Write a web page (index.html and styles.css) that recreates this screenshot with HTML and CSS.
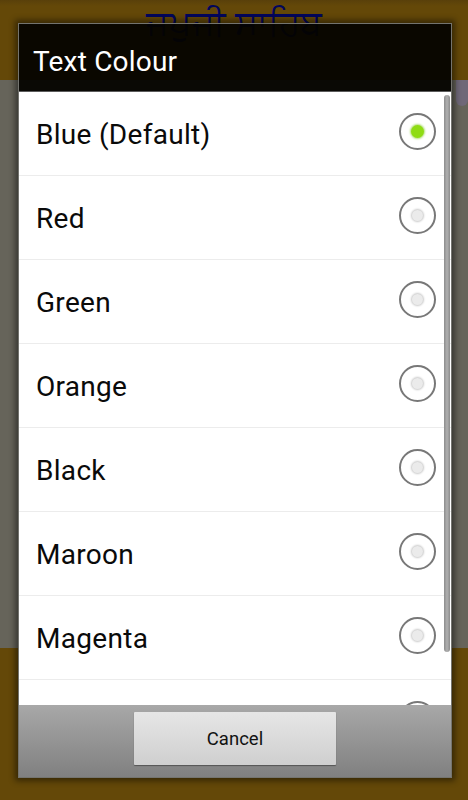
FILE: index.html
```html
<!DOCTYPE html>
<html>
  <head>
    <meta name="viewport" content="width=device-width, initial-scale=1.0" />
    <link rel="stylesheet" href="styles.css">
  </head>
  <body>
    <div class="screen">
      <div class="app-header">
        <span class="app-title">ਜਪੁਜੀ ਸਾਹਿਬ</span>
      </div>
      <div class="app-content">
        <div class="app-scroll"></div>
      </div>
      <div class="app-footer"></div>
    </div>

    <div class="dialog">
      <div class="dialog-title">Text Colour</div>
      <div class="dialog-list">
        <div class="option">
          <span class="option-label">Blue (Default)</span>
          <span class="radio checked"></span>
        </div>
        <div class="option">
          <span class="option-label">Red</span>
          <span class="radio"></span>
        </div>
        <div class="option">
          <span class="option-label">Green</span>
          <span class="radio"></span>
        </div>
        <div class="option">
          <span class="option-label">Orange</span>
          <span class="radio"></span>
        </div>
        <div class="option">
          <span class="option-label">Black</span>
          <span class="radio"></span>
        </div>
        <div class="option">
          <span class="option-label">Maroon</span>
          <span class="radio"></span>
        </div>
        <div class="option">
          <span class="option-label">Magenta</span>
          <span class="radio"></span>
        </div>
        <div class="option">
          <span class="option-label"></span>
          <span class="radio"></span>
        </div>
        <div class="list-scrollbar"></div>
      </div>
      <div class="dialog-footer">
        <button class="cancel-button">Cancel</button>
      </div>
    </div>
  </body>
</html>
```

FILE: styles.css
```css
* {
  box-sizing: border-box;
  margin: 0;
  padding: 0;
}

body {
  width: 468px;
  height: 800px;
  overflow: hidden;
  position: relative;
  font-family: Roboto, "Noto Sans", sans-serif;
  background: #644808;
}

.screen {
  height: 800px;
  display: flex;
  flex-direction: column;
}

.app-header {
  height: 80px;
  flex: none;
  display: flex;
  justify-content: center;
  background: linear-gradient(#59400a 0, #644808 6px);
}

.app-title {
  font-family: "Noto Sans", "DejaVu Sans", sans-serif;
  font-size: 35px;
  line-height: 44px;
  color: #02065c;
}

.app-content {
  height: 568px;
  flex: none;
  position: relative;
  background: #66645a;
}

.app-scroll {
  position: absolute;
  top: 0;
  right: 0;
  width: 12px;
  height: 26px;
  border-radius: 0 0 6px 6px;
  background: #6f6878;
}

.app-footer {
  flex: 1;
  background: #644808;
}

.dialog {
  position: absolute;
  left: 18px;
  top: 23px;
  width: 434px;
  height: 755px;
  display: flex;
  flex-direction: column;
  border: 1px solid #74746f;
  box-shadow: 0 0 6px 3px rgba(0, 0, 0, 0.45);
}

.dialog-title {
  height: 68px;
  flex: none;
  padding: 20px 0 0 14px;
  font-size: 28px;
  letter-spacing: 0.2px;
  line-height: 36px;
  color: #fff;
  background: rgba(4, 3, 0, 0.94);
  border-bottom: 1px solid #5c5c5c;
}

.dialog-list {
  flex: 1;
  position: relative;
  overflow: hidden;
  background: #fff;
}

.option {
  height: 84px;
  display: flex;
  align-items: center;
  justify-content: space-between;
  padding: 0 15px 0 17px;
  border-bottom: 1px solid #ececec;
}

.option-label {
  margin-top: 2px;
  font-size: 28px;
  letter-spacing: 0.3px;
  color: #0a0a0a;
}

.radio {
  width: 37px;
  height: 37px;
  flex: none;
  margin-bottom: 4px;
  display: flex;
  align-items: center;
  justify-content: center;
  border: 2px solid #787878;
  border-radius: 50%;
  background: #fff;
}

.radio::after {
  content: "";
  width: 11px;
  height: 11px;
  border-radius: 50%;
  background: #ebebeb;
  box-shadow: 0 0 2px 1px #c8c8c8;
}

.radio.checked::after {
  width: 13px;
  height: 13px;
  background: #8fdc14;
  box-shadow: 0 0 2px 1px #b4e07a;
}

.list-scrollbar {
  position: absolute;
  top: 3px;
  right: 1px;
  width: 6px;
  height: 557px;
  border-radius: 3px;
  background: linear-gradient(90deg, #8c8c8c, #b0b0b0 50%, #8c8c8c);
}

.dialog-footer {
  height: 72px;
  flex: none;
  display: flex;
  justify-content: center;
  padding-top: 7px;
  background: linear-gradient(#a8a8a8, #808080);
}

.cancel-button {
  width: 202px;
  height: 53px;
  border: none;
  border-radius: 1px;
  font-family: Roboto, sans-serif;
  font-size: 18.5px;
  color: #111;
  background: linear-gradient(#e6e6e6, #cfcfcf);
  box-shadow: 0 1px 1px #555;
}
```
